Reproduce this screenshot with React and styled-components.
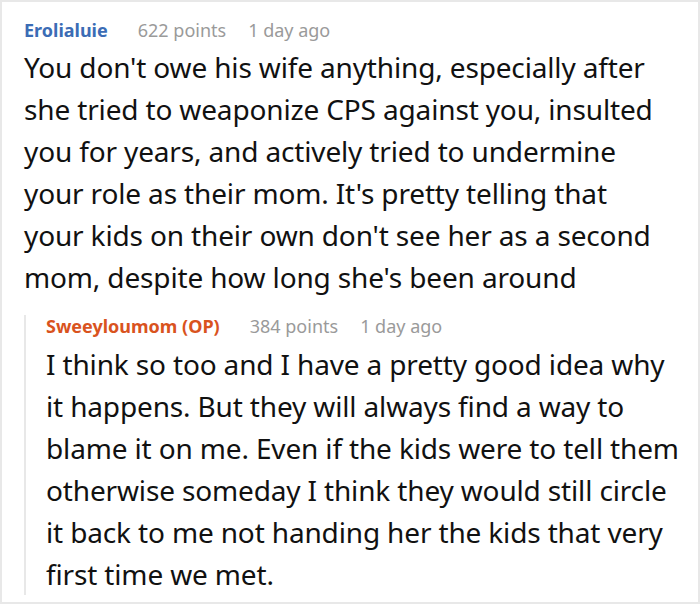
import React from "react";
import styled, { createGlobalStyle } from "styled-components";

const Global = createGlobalStyle`
  html, body { margin: 0; padding: 0; background: #fff; }
  body { font-family: "Noto Sans", "Open Sans", sans-serif; }
`;

const Card = styled.div`
  box-sizing: border-box;
  width: 700px;
  height: 604px;
  border: 2px solid #e8e8e8;
  padding: 17px 14px 0 22px;
  background: #fff;
  overflow: hidden;
`;

const Meta = styled.div`
  display: flex;
  align-items: baseline;
  gap: 22px;
  font-size: 18px;
  line-height: 22px;
  white-space: nowrap;
`;

const Author = styled.span`
  font-weight: 700;
  color: ${(p) => p.$color};
  margin-right: 8px;
`;

const Info = styled.span`
  color: #9a9a9a;
`;

const Body = styled.p`
  margin: ${(p) => p.$gap}px 0 0;
  max-width: 642px;
  font-size: 28px;
  line-height: 42px;
  letter-spacing: -0.15px;
  color: #111;
`;

const Reply = styled.div`
  margin-top: 17px;
  border-left: 2px solid #e8e8e8;
  padding: 0 0 0 20px;
`;

function Comment({ author, color, points, time, gap, children }) {
  return (
    <>
      <Meta>
        <Author $color={color}>{author}</Author>
        <Info>{points} points</Info>
        <Info>{time}</Info>
      </Meta>
      <Body $gap={gap}>{children}</Body>
    </>
  );
}

export default function App() {
  return (
    <>
      <Global />
      <Card>
        <Comment author="Erolialuie" color="#3b6cb5" points="622" time="1 day ago" gap={5}>
          You don't owe his wife anything, especially after she tried to weaponize CPS against you, insulted you for years, and actively tried to undermine your role as their mom. It's pretty telling that your kids on their own don't see her as a second mom, despite how long she's been around
        </Comment>
        <Reply>
          <Comment author="Sweeyloumom (OP)" color="#d9531e" points="384" time="1 day ago" gap={6}>
            I think so too and I have a pretty good idea why it happens. But they will always find a way to blame it on me. Even if the kids were to tell them otherwise someday I think they would still circle it back to me not handing her the kids that very first time we met.
          </Comment>
        </Reply>
      </Card>
    </>
  );
}
